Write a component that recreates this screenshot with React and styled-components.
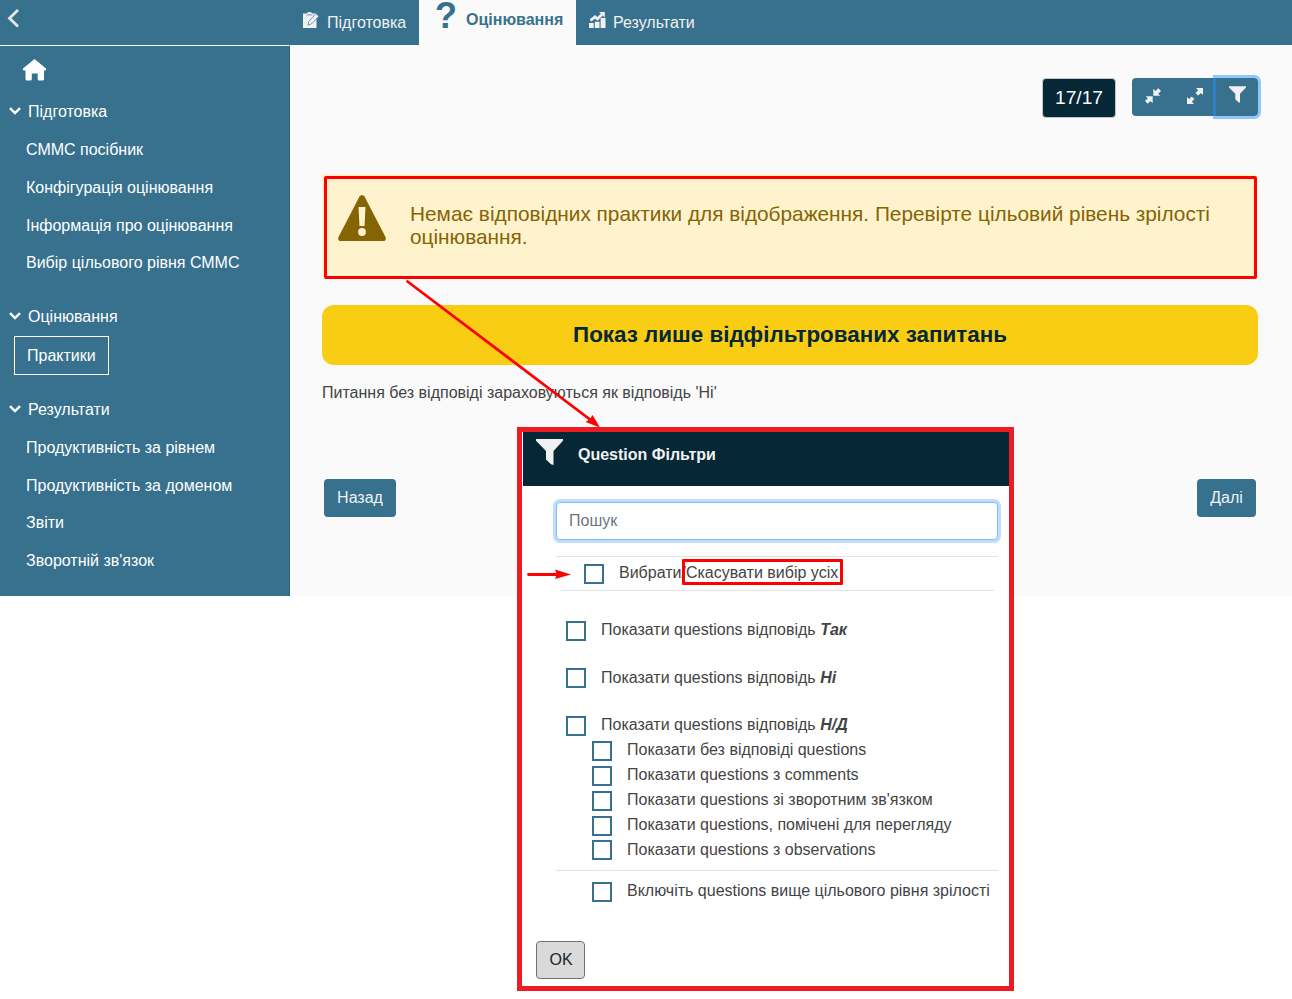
import React from 'react';
import styled, { createGlobalStyle } from 'styled-components';

const Global = createGlobalStyle`
  *, *::before, *::after { box-sizing: border-box; }
  body { margin: 0; background: #fff; font-family: "Liberation Sans", Arial, sans-serif; font-size: 16px; line-height: 24px; color: #444; }
  button, input { font: inherit; margin: 0; }
  svg { display: block; flex: none; }
`;

const Page = styled.div`
  position: relative;
  width: 1292px;
  height: 999px;
  overflow: hidden;
  white-space: nowrap;
`;
const Shell = styled.div`
  height: 596px;
  display: flex;
  flex-direction: column;
  background: #fafafa;
`;
const Header = styled.header`
  flex: none;
  height: 45px;
  display: flex;
  background: #37718e;
  color: #f1f1f1;
`;
const Back = styled.div`
  width: 291px;
  padding: 9px 0 0 7px;
`;
const Tab = styled.div`
  width: ${p => p.$w}px;
  display: flex;
  align-items: flex-start;
  gap: ${p => p.$gap || 8}px;
  padding: ${p => (p.$active ? '0 0 0 16px' : '10px 0 0 12px')};
  background: ${p => (p.$active ? '#fafafa' : 'transparent')};
  color: ${p => (p.$active ? '#37718e' : '#f1f1f1')};
  font-weight: ${p => (p.$active ? 700 : 400)};
`;
const TabIcon = styled.span`
  padding-top: 2px;
`;
const TabText = styled.span`
  padding-top: ${p => p.$top ?? 1}px;
`;
const Question = styled.span`
  width: 21px;
  font-size: 36px;
  line-height: 32px;
`;
const Columns = styled.div`
  flex: 1;
  display: flex;
`;
const Sidebar = styled.nav`
  width: 290px;
  border-top: 1px solid #fff;
  border-right: 1px solid #2f6680;
  background: #37718e;
  color: #fff;
`;
const HomeLink = styled.div`
  height: 46px;
  padding: 13px 0 0 22px;
`;
const Section = styled.section`
  margin-bottom: ${p => p.$after || 0}px;
`;
const SectionTitle = styled.div`
  height: 38px;
  display: flex;
  align-items: center;
  gap: 7px;
  padding-left: 9px;
`;
const SectionName = styled.span`
  padding-top: 2px;
`;
const NavItem = styled.div`
  height: 37.8px;
  line-height: 40px;
  padding-left: 26px;
`;
const ActiveItem = styled.div`
  width: 95px;
  height: 39px;
  margin: 1px 0 0 14px;
  border: 1px solid #fff;
  line-height: 37px;
  padding-left: 12px;
`;
const Main = styled.main`
  flex: 1;
  padding: 33px 34px 0 32px;
`;
const Toolbar = styled.div`
  height: 40px;
  display: flex;
  justify-content: flex-end;
  gap: 16px;
`;
const Counter = styled.div`
  width: 74px;
  height: 40px;
  padding-left: 12px;
  border: 1px solid #c4c8ca;
  border-radius: 4px;
  background: #052736;
  color: #fff;
  font-size: 19.2px;
  line-height: 37px;
`;
const ButtonGroup = styled.div`
  width: 126px;
  height: 38px;
  display: flex;
  border-radius: 4px;
  background: #37718e;
`;
const IconButton = styled.div`
  width: 42px;
  display: flex;
  justify-content: center;
  padding-top: ${p => p.$top}px;
  border-radius: 0 4px 4px 0;
  box-shadow: ${p => (p.$focus ? '0 0 0 3px rgba(38,143,255,.5)' : 'none')};
`;
const Alert = styled.div`
  width: 935px;
  height: 105px;
  margin-top: 56px;
  padding: 2px 0 0 2px;
  background: #fff3cd;
`;
const AlertFrame = styled.div`
  width: 933px;
  height: 103px;
  display: flex;
  gap: 24px;
  padding: 16px 11px;
  border: 3px solid #f00;
  border-radius: 2px;
  color: #856404;
  font-size: 20.8px;
  line-height: 23px;
`;
const AlertText = styled.div`
  padding-top: 7px;
`;
const Banner = styled.div`
  width: 936px;
  height: 60px;
  margin-top: 26px;
  border-radius: 12px;
  background: #facd15;
  color: #052736;
  font-size: 22.4px;
  font-weight: 700;
  line-height: 59px;
  text-align: center;
`;
const Note = styled.p`
  margin: 16px 0 74px;
`;
const NavButtons = styled.div`
  display: flex;
  justify-content: space-between;
  padding: 0 2px;
`;
const NavButton = styled.div`
  width: ${p => p.$w}px;
  height: 38px;
  border-radius: 4px;
  background: #37718e;
  color: #f1f1f1;
  line-height: 37px;
  text-align: center;
`;

const Dialog = styled.div`
  position: absolute;
  left: 517px;
  top: 427px;
  width: 497px;
  height: 564px;
  border: 5px solid #ed1c24;
  background: #fff;
`;
const DialogHeader = styled.div`
  height: 54px;
  margin-left: 1px;
  display: flex;
  gap: 15px;
  padding: 7px 0 0 13px;
  background: #052736;
  color: #f1f1f1;
  font-weight: 700;
`;
const DialogTitle = styled.div`
  padding-top: 4px;
`;
const DialogBody = styled.div`
  padding: 16px 11px 0 34px;
`;
const Search = styled.input`
  display: block;
  width: 442px;
  height: 38px;
  padding: 1px 12px;
  border: 1px solid #80bdff;
  border-radius: 4px;
  outline: none;
  box-shadow: 0 0 0 3px #bfdeff;
  &::placeholder { color: #6c757d; opacity: 1; }
`;
const SelectAll = styled.div`
  height: 34px;
  margin-top: 16px;
  padding-left: 28px;
  border-top: 1px solid #e3e3e3;
`;
const Rule = styled.div`
  height: 1px;
  margin: ${p => p.$margin};
  background: #e3e3e3;
`;
const Row = styled.div`
  height: ${p => p.$h}px;
  display: flex;
  gap: 15px;
  padding-left: ${p => p.$indent || 0}px;
`;
const Box = styled.span`
  flex: none;
  width: 20px;
  height: 20px;
  margin-top: ${p => p.$top ?? 3}px;
  border: 2px solid #37718e;
  background: #fff;
`;
const RowText = styled.span`
  line-height: 24px;
  padding-top: ${p => p.$top || 0}px;
`;
const Marked = styled.span`
  position: relative;
  &::after {
    content: "";
    position: absolute;
    left: -4px;
    right: -5px;
    top: -5px;
    height: 26px;
    border: 3px solid #f00;
    border-radius: 1px;
  }
`;
const Strong = styled.b`
  font-style: italic;
`;
const OkButton = styled.div`
  width: 49px;
  height: 38px;
  margin: 37px 0 0 14px;
  padding-left: 1px;
  border: 1px solid #6c757d;
  border-radius: 4px;
  background: #dadada;
  color: #212529;
  line-height: 36px;
  text-align: center;
`;
const Arrows = styled.svg`
  position: absolute;
  left: 0;
  top: 0;
  pointer-events: none;
`;

const Chevron = () => (
  <svg width="12" height="8" viewBox="0 0 12 8"><path d="M1 1.200 6 6.100l5-4.900" fill="none" stroke="#fff" strokeWidth="2.500" /></svg>
);
const Funnel = ({ w, h }) => (
  <svg width={w} height={h} viewBox="0 0 27 26"><path d="M0 0h27v1.800L17.500 12v14l-2.500-.8L10 20.500V12L0 1.800z" fill="#f1f1f1" /></svg>
);

const results = ['Продуктивність за рівнем', 'Продуктивність за доменом', 'Звіти', "Зворотній зв'язок"];
const prep = ['СММС посібник', 'Конфігурація оцінювання', 'Інформація про оцінювання', 'Вибір цільового рівня СММС'];
const answers = [
  { label: 'Так', height: 47 },
  { label: 'Ні', height: 48, textTop: 1 },
  { label: 'Н/Д', height: 25 },
];
const extras = ['Показати без відповіді questions', 'Показати questions з comments', "Показати questions зі зворотним зв'язком", 'Показати questions, помічені для перегляду', 'Показати questions з observations'];

export default function App() {
  return (
    <Page>
      <Global />
      <Shell>
        <Header>
          <Back>
            <svg width="12" height="19" viewBox="0 0 12 19"><path d="M11 1 2.500 9.200l8.500 8.300" fill="none" stroke="#e6e6e6" strokeWidth="2.800" /></svg>
          </Back>
          <Tab $w={128} $gap={7}>
            <TabIcon>
              <svg width="17" height="16" viewBox="0 0 17 16">
                <path d="M0 1.500h3.500Q4 0 6.500 0T9.500 1.500H13.500V16H0z" fill="#f1f1f1" />
                <path d="M3.500 2.900h6" stroke="#37718e" strokeWidth=".7" />
                <path d="M5 13.200l.8-3.900 7.200-7.500 3 2.400-7.200 7.500z" fill="#f1f1f1" stroke="#37718e" strokeWidth=".7" />
              </svg>
            </TabIcon>
            <TabText>Підготовка</TabText>
          </Tab>
          <Tab $active $w={157} $gap={10}>
            <Question>?</Question>
            <TabText $top={8}>Оцінювання</TabText>
          </Tab>
          <Tab $w={160} $gap={7}>
            <TabIcon>
              <svg width="18" height="16" viewBox="0 0 18 16">
                <path d="M1 11h4.700v5H1zM6.800 9.800h4.700V16H6.800zM12.600 6h4.900v10h-4.900z" fill="#f1f1f1" />
                <path d="M2.500 8.500 7 4.800l2.500 2 4.500-4.300" fill="none" stroke="#f1f1f1" strokeWidth="2.800" />
                <path d="M11 0h5.800v5.500z" fill="#f1f1f1" />
              </svg>
            </TabIcon>
            <TabText>Результати</TabText>
          </Tab>
        </Header>
        <Columns>
          <Sidebar>
            <HomeLink>
              <svg width="25" height="22" viewBox="0 0 25 22"><path d="M12.500 0 24 9.500q.8 2-1 2H22v8.500q0 1.500-1.500 1.500h-3.300q-1.500 0-1.500-1.500v-5.500H9.800V20q0 1.500-1.500 1.500H5Q3.500 21.500 3.500 20v-8.500H2q-1.800 0-1-2z" fill="#fff" /></svg>
            </HomeLink>
            <Section $after={15.8}>
              <SectionTitle><Chevron /><SectionName>Підготовка</SectionName></SectionTitle>
              {prep.map(t => <NavItem key={t}>{t}</NavItem>)}
            </Section>
            <Section $after={14.9}>
              <SectionTitle><Chevron /><SectionName>Оцінювання</SectionName></SectionTitle>
              <ActiveItem>Практики</ActiveItem>
            </Section>
            <Section>
              <SectionTitle><Chevron /><SectionName>Результати</SectionName></SectionTitle>
              {results.map(t => <NavItem key={t}>{t}</NavItem>)}
            </Section>
          </Sidebar>
          <Main>
            <Toolbar>
              <Counter>17/17</Counter>
              <ButtonGroup>
                <IconButton $top={10}>
                  <svg width="16" height="16" viewBox="0 0 16 16" fill="#f1f1f1"><path d="M8.300.8v7h7l-2.100-2L16 3 13.300.2l-2.800 2.700zM7.700 15.200v-7h-7l2.100 2L0 13l2.700 2.800 2.800-2.700z" /></svg>
                </IconButton>
                <IconButton $top={10}>
                  <svg width="16" height="16" viewBox="0 0 16 16" fill="#f1f1f1"><path d="M16 0H9l2.200 2.200L8.500 4.900l2.700 2.700 2.700-2.700L16 7zM0 16h7l-2.200-2.200 2.700-2.700-2.700-2.700-2.700 2.700L0 9z" /></svg>
                </IconButton>
                <IconButton $top={8} $focus><Funnel w={17} h={17} /></IconButton>
              </ButtonGroup>
            </Toolbar>
            <Alert>
              <AlertFrame>
                <svg width="48" height="46" viewBox="0 0 48 46">
                  <path d="M21.500 1.500Q24 -1.500 26.500 1.500L47.500 42q1.200 4-2.500 4H3Q-.7 46 .5 42z" fill="#856404" />
                  <path d="M20.500 12h7l-1 19h-5z" fill="#fff3cd" /><circle cx="24" cy="37" r="3.900" fill="#fff3cd" />
                </svg>
                <AlertText>Немає відповідних практики для відображення. Перевірте цільовий рівень зрілості<br />оцінювання.</AlertText>
              </AlertFrame>
            </Alert>
            <Banner>Показ лише відфільтрованих запитань</Banner>
            <Note>Питання без відповіді зараховуються як відповідь 'Ні'</Note>
            <NavButtons>
              <NavButton $w={72}>Назад</NavButton>
              <NavButton $w={59}>Далі</NavButton>
            </NavButtons>
          </Main>
        </Columns>
      </Shell>
      <Dialog>
        <DialogHeader>
          <Funnel w={27} h={26} />
          <DialogTitle>Question Фільтри</DialogTitle>
        </DialogHeader>
        <DialogBody>
          <Search placeholder="Пошук" />
          <SelectAll>
            <Row $h={33}><Box $top={7} /><RowText $top={4}>Вибрати/<Marked>Скасувати вибір усіх</Marked></RowText></Row>
          </SelectAll>
          <Rule $margin="0 4px 27px 5px" />
          {answers.map(a => (
            <Row key={a.label} $h={a.height} $indent={10}>
              <Box />
              <RowText $top={a.textTop}>Показати questions відповідь <Strong>{a.label}</Strong></RowText>
            </Row>
          ))}
          {extras.map((t, i) => (
            <Row key={t} $h={24.9} $indent={36}><Box $top={i === extras.length - 1 ? 2 : 3} /><RowText>{t}</RowText></Row>
          ))}
          <Rule $margin="8px 0 8px 0" />
          <Row $h={25} $indent={36}><Box /><RowText>Включіть questions вище цільового рівня зрілості</RowText></Row>
        </DialogBody>
        <OkButton>OK</OkButton>
      </Dialog>
      <Arrows width="1292" height="999" viewBox="0 0 1292 999">
        <path d="M407.500 281.500 590 419.500M528.500 574.500h32" stroke="#f00" strokeWidth="2.800" strokeLinecap="round" />
        <path d="M600 427.500 592.500 415l-2.500 4-4.500 3zM571 574.500l-16-5 2 5-2 4.500z" fill="#f00" />
      </Arrows>
    </Page>
  );
}
